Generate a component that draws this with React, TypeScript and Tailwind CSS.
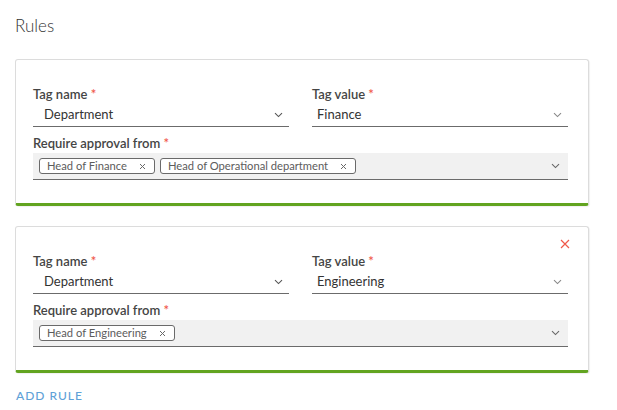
import React from "react";

const Chevron = ({ className = "" }: { className?: string }) => (
  <svg width="9" height="6" viewBox="0 0 9 6" className={className} fill="none">
    <path d="M1 1.2 L4.5 4.6 L8 1.2" stroke="currentColor" strokeWidth="1.1" />
  </svg>
);

const Close = ({ className = "" }: { className?: string }) => (
  <svg width="7" height="7" viewBox="0 0 7 7" className={className} fill="none">
    <path d="M1 1 L6 6 M6 1 L1 6" stroke="currentColor" strokeWidth="1" />
  </svg>
);

const Label = ({ children }: { children: React.ReactNode }) => (
  <div className="h-4 text-[13px] leading-4 font-semibold text-[#454545]">
    {children} <span className="text-[#f0594a]">*</span>
  </div>
);

const Chip = ({ text }: { text: string }) => (
  <div className="flex h-4 items-center rounded-[3px] border border-[#6a6a6a] bg-white pl-[7px] pr-[8px] text-[11.2px] leading-none text-[#5c5c5c]">
    <span>{text}</span>
    <Close className="ml-[12px] text-[#6a6a6a]" />
  </div>
);

function Rule({ value, chips, removable }: { value: string; chips: string[]; removable?: boolean }) {
  return (
    <div className="relative rounded-[3px] border border-[#dcdcdc] border-b-[3px] border-b-[#62a420] bg-white pl-[17px] pr-[20px] pt-[26px] pb-[23px] shadow-[1px_1px_1px_rgba(0,0,0,0.06)]">
      {removable && (
        <svg width="10" height="10" viewBox="0 0 10 10" className="absolute right-[18px] top-[12px] text-[#f0594a]" fill="none">
          <path d="M1 1 L9 9 M9 1 L1 9" stroke="currentColor" strokeWidth="1.2" />
        </svg>
      )}
      <div className="grid grid-cols-2 gap-x-[23px]">
        <div>
          <Label>Tag name</Label>
          <div className="mt-px flex h-6 items-center justify-between border-b border-[#6b6b6b] pl-[11px] pr-[6px] text-[13px] text-[#333]">
            <span>Department</span>
            <Chevron className="text-[#555]" />
          </div>
        </div>
        <div>
          <Label>Tag value</Label>
          <div className="mt-px flex h-6 items-center justify-between border-b border-[#6b6b6b] pl-[5px] pr-[6px] text-[13px] text-[#333]">
            <span>{value}</span>
            <Chevron className="text-[#888]" />
          </div>
        </div>
      </div>
      <div className="mt-2">
        <Label>Require approval from</Label>
        <div className="mt-[2px] flex h-[27px] items-center justify-between border-b border-[#6b6b6b] bg-[#f1f1f1] pl-[6px] pr-[8px]">
          <div className="flex gap-[5px]">
            {chips.map((c) => (
              <Chip key={c} text={c} />
            ))}
          </div>
          <Chevron className="text-[#666]" />
        </div>
      </div>
    </div>
  );
}

export default function App() {
  return (
    <div className="min-h-[410px] w-[617px] bg-white pl-[15px] pr-[28px] pt-[14px]" style={{ fontFamily: "Lato, 'Open Sans', sans-serif" }}>
      <div className="h-6 text-[17px] leading-6 font-light text-[#333]">Rules</div>
      <div className="mt-[21px] flex flex-col gap-5">
        <Rule value="Finance" chips={["Head of Finance", "Head of Operational department"]} />
        <Rule value="Engineering" chips={["Head of Engineering"]} removable />
      </div>
      <div className="mt-[14px] pl-px text-[12px] font-medium tracking-[1px] text-[#5fa2d8]">ADD RULE</div>
    </div>
  );
}
